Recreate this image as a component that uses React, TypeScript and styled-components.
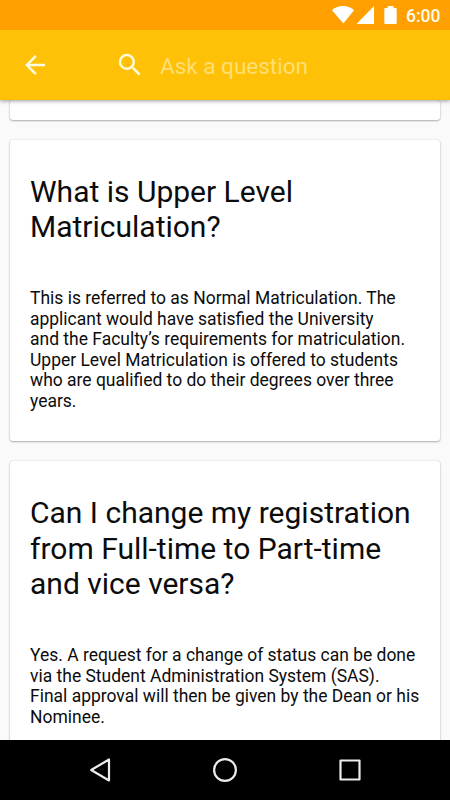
import React from "react";
import styled, { createGlobalStyle } from "styled-components";

const GlobalStyle = createGlobalStyle`
  * { box-sizing: border-box; }
  body { margin: 0; background: #fafafa; font-family: Roboto, "Noto Sans", sans-serif; }
`;
const Screen = styled.div`
  width: 450px; height: 800px; display: flex; flex-direction: column;
  overflow: hidden; background: #fafafa; color: #0c0c0c;
`;
const StatusBar = styled.header`
  height: 30px; flex: none; display: flex; align-items: center; justify-content: flex-end;
  padding-right: 9px; background: #ffa000; color: #fffbea; z-index: 2;
`;
const StatusIcons = styled.svg`
  display: block; width: 68px; height: 30px; margin-right: 7px;
`;
const Clock = styled.span`
  font-size: 17.5px; font-weight: 500; line-height: 30px; padding-top: 1px; width: 35px; white-space: nowrap;
`;
const Toolbar = styled.div`
  height: 70px; flex: none; display: flex; align-items: center; padding-left: 20px;
  background: #ffc107; box-shadow: 0 1px 4px rgba(0, 0, 0, 0.4); z-index: 1;
`;
const ToolIcon = styled.svg<{ $gap: number }>`
  width: 30px; height: 30px; fill: #fffbe0; margin-right: ${(p) => p.$gap}px;
`;
const Hint = styled.span`
  font-size: 22.5px; line-height: 30px; padding-top: 1px; color: #ffdf75; white-space: nowrap;
`;
const Feed = styled.main`
  flex: 1; min-height: 0; overflow: hidden; display: flex; flex-direction: column;
  gap: 20px; padding: 0 10px;
`;
const Card = styled.article<{ $height: number }>`
  flex: none; height: ${(p) => p.$height}px; padding: 0 20px; background: #fff;
  border-radius: 3px; box-shadow: 0 1px 2px rgba(0, 0, 0, 0.28), 0 0 2px rgba(0, 0, 0, 0.16);
`;
const Question = styled.h2`
  margin: 0; padding-top: 34px; font-size: 30px; line-height: 35.3px; font-weight: 400; white-space: nowrap;
`;
const Answer = styled.p`
  margin: 44.3px 0 0; font-size: 17.48px; line-height: 20.5px; white-space: nowrap;
`;
const NavBar = styled.nav`
  height: 60px; flex: none; background: #000; display: flex; justify-content: center; align-items: center;
  gap: 95px; z-index: 2;
`;
const NavIcon = styled.svg`
  width: 30px; height: 30px; fill: none; stroke: #ececec; stroke-width: 2.2; stroke-linejoin: round;
`;

const Lines = ({ text }: { text: string[] }) => (
  <>{text.map((t, i) => <React.Fragment key={t}>{i > 0 && <br />}{t}</React.Fragment>)}</>
);

const faqs = [
  {
    height: 301.8,
    question: ["What is Upper Level", "Matriculation?"],
    answer: [
      "This is referred to as Normal Matriculation. The",
      "applicant would have satisfied the University",
      "and the Faculty’s requirements for matriculation.",
      "Upper Level Matriculation is offered to students",
      "who are qualified to do their degrees over three",
      "years.",
    ],
  },
  {
    height: 320,
    question: ["Can I change my registration", "from Full-time to Part-time", "and vice versa?"],
    answer: [
      "Yes. A request for a change of status can be done",
      "via the Student Administration System (SAS).",
      "Final approval will then be given by the Dean or his",
      "Nominee.",
    ],
  },
];

export default function App() {
  return (
    <Screen>
      <GlobalStyle />
      <StatusBar>
        <StatusIcons viewBox="0 0 68 30" fill="#fff">
          <path d="M1 10.200C7.500 4.700 16.500 4.700 23 10.200L12.300 23.500Z" />
          <path d="M25.500 24L43 6V24Z" />
          <path d="M54.300 8H56.700V6.800Q56.700 6 57.500 6H61.900Q62.700 6 62.700 6.800V8H64.700Q65.700 8 65.700 9V23Q65.700 24 64.700 24H54.300Q53.300 24 53.300 23V9Q53.300 8 54.300 8Z" />
        </StatusIcons>
        <Clock>6:00</Clock>
      </StatusBar>
      <Toolbar>
        <ToolIcon $gap={65} viewBox="0 0 24 24">
          <path d="M20 11H7.830l5.590-5.590L12 4l-8 8 8 8 1.410-1.410L7.830 13H20v-2z" />
        </ToolIcon>
        <ToolIcon $gap={15} viewBox="0 0 24 24">
          <path d="M15.500 14h-.790l-.280-.270A6.471 6.471 0 0 0 16 9.500 6.500 6.500 0 1 0 9.500 16c1.610 0 3.090-.590 4.230-1.570l.270.280v.790l5 4.990L20.490 19l-4.990-5zm-6 0C7.010 14 5 11.990 5 9.500S7.010 5 9.500 5 14 7.010 14 9.500 11.990 14 9.500 14z" />
        </ToolIcon>
        <Hint>Ask a question</Hint>
      </Toolbar>
      <Feed>
        <Card $height={19.5} />
        {faqs.map((f) => (
          <Card key={f.height} $height={f.height}>
            <Question><Lines text={f.question} /></Question>
            <Answer><Lines text={f.answer} /></Answer>
          </Card>
        ))}
      </Feed>
      <NavBar>
        <NavIcon viewBox="0 0 30 30"><path d="M24 4.500V25.500L6.200 15Z" /></NavIcon>
        <NavIcon viewBox="0 0 30 30"><circle cx="15" cy="15" r="10.900" /></NavIcon>
        <NavIcon viewBox="0 0 30 30"><rect x="5.500" y="5.500" width="19" height="19" /></NavIcon>
      </NavBar>
    </Screen>
  );
}
